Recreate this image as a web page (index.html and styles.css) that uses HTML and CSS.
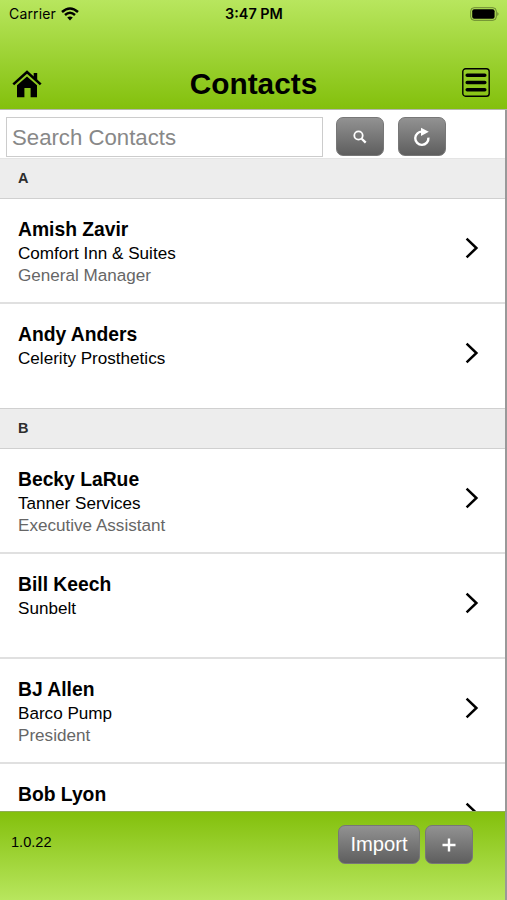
FILE: index.html
```
<!DOCTYPE html>
<html lang="en">
<head>
  <meta charset="UTF-8" />
  <title>Contacts</title>
  <link rel="stylesheet" href="styles.css">
</head>
<body>
  <div id="header">
    <div class="status-bar">
      <div class="carrier">
        <span>Carrier</span>
        <svg width="18" height="14" viewBox="0 0 18 14" fill="none" stroke="#000" stroke-width="2.5">
          <path d="M1 5 Q9 -2 17 5" />
          <path d="M4 8 Q9 3.6 14 8" />
          <path d="M9 13.4 L6.2 10.5 Q9 8.3 11.8 10.5 Z" fill="#000" stroke="none" />
        </svg>
      </div>
      <div class="time">3:47 PM</div>
      <div class="battery">
        <svg width="30" height="14" viewBox="0 0 30 14">
          <rect x="0.7" y="0.7" width="25.6" height="12.6" rx="3.5" fill="none" stroke="#000" stroke-opacity="0.4" />
          <rect x="2.2" y="2.2" width="22.4" height="9.6" rx="2" />
          <path d="M27.4 5 Q29.6 7 27.4 9 Z" fill-opacity="0.45" />
        </svg>
      </div>
    </div>
    <div class="title-bar">
      <svg class="home" width="30" height="28" viewBox="0 0 30 28">
        <path d="M1.3 14.4 L15 2 L28.7 14.4" fill="none" stroke="#000" stroke-width="2.6" />
        <path d="M21.7 3 H25.2 V10.6 L21.7 7.4 Z" />
        <path d="M5 15.2 L15 6.4 L25 15.2 V27.3 H18.6 V18 H12.4 V27.3 H5 Z" />
      </svg>
      <h1>Contacts</h1>
      <svg class="menu" width="28" height="29" viewBox="0 0 28 29" fill="none" stroke="#000">
        <rect x="0.8" y="0.8" width="26.4" height="27.4" rx="2.8" stroke-width="1.4" />
        <path d="M5.2 7.2 H22.8 M5.2 14.5 H22.8 M5.2 21.8 H22.8" stroke-width="3.5" stroke-linecap="round" />
      </svg>
    </div>
  </div>

  <div id="content">
    <div class="search-row">
      <input class="search" type="text" placeholder="Search Contacts">
      <button class="btn btn-icon">
        <svg width="14" height="14" viewBox="0 0 14 14" fill="none" stroke="#fff">
          <circle cx="5.5" cy="5.5" r="4.2" stroke-width="1.8" />
          <path d="M8.7 8.7 L12.7 12.6" stroke-width="2.3" />
        </svg>
      </button>
      <button class="btn btn-icon">
        <svg width="18" height="20" viewBox="0 0 18 20">
          <path d="M9.5 4.7 A6.6 6.6 0 1 0 15.4 10.6" fill="none" stroke="#fff" stroke-width="2.4" />
          <path d="M8 0.8 L15.8 4.8 L8 9 Z" fill="#fff" />
        </svg>
      </button>
    </div>

    <div class="divider first">A</div>
    <div class="contact">
      <div class="info">
        <div class="name">Amish Zavir</div>
        <div class="company">Comfort Inn &amp; Suites</div>
        <div class="job">General Manager</div>
      </div>
      <svg class="arrow" width="14" height="22" viewBox="0 0 14 22"><path d="M1.6 1.6 L11.4 11 L1.6 20.4" /></svg>
    </div>
    <div class="contact">
      <div class="info">
        <div class="name">Andy Anders</div>
        <div class="company">Celerity Prosthetics</div>
      </div>
      <svg class="arrow" width="14" height="22" viewBox="0 0 14 22"><path d="M1.6 1.6 L11.4 11 L1.6 20.4" /></svg>
    </div>

    <div class="divider">B</div>
    <div class="contact">
      <div class="info">
        <div class="name">Becky LaRue</div>
        <div class="company">Tanner Services</div>
        <div class="job">Executive Assistant</div>
      </div>
      <svg class="arrow" width="14" height="22" viewBox="0 0 14 22"><path d="M1.6 1.6 L11.4 11 L1.6 20.4" /></svg>
    </div>
    <div class="contact">
      <div class="info">
        <div class="name">Bill Keech</div>
        <div class="company">Sunbelt</div>
      </div>
      <svg class="arrow" width="14" height="22" viewBox="0 0 14 22"><path d="M1.6 1.6 L11.4 11 L1.6 20.4" /></svg>
    </div>
    <div class="contact">
      <div class="info">
        <div class="name">BJ Allen</div>
        <div class="company">Barco Pump</div>
        <div class="job">President</div>
      </div>
      <svg class="arrow" width="14" height="22" viewBox="0 0 14 22"><path d="M1.6 1.6 L11.4 11 L1.6 20.4" /></svg>
    </div>
    <div class="contact">
      <div class="info">
        <div class="name">Bob Lyon</div>
      </div>
      <svg class="arrow" width="14" height="22" viewBox="0 0 14 22"><path d="M1.6 1.6 L11.4 11 L1.6 20.4" /></svg>
    </div>
  </div>

  <div id="footer">
    <span class="version">1.0.22</span>
    <button class="btn btn-import">Import</button>
    <button class="btn btn-icon">
      <svg width="14" height="14" viewBox="0 0 14 14"><path d="M7 0.5 V13.5 M0.5 7 H13.5" stroke="#fff" stroke-width="2.4" /></svg>
    </button>
  </div>
</body>
</html>
```
FILE: styles.css
```
* {
  box-sizing: border-box;
}
body {
  margin: 0;
  height: 900px;
  overflow: hidden;
  display: flex;
  flex-direction: column;
  background: #fff;
  color: #000;
  font-family: "Liberation Sans", Arial, sans-serif;
}
svg {
  display: block;
  flex: none;
}
#header {
  flex: none;
  height: 110px;
  background: linear-gradient(#b8e65e, #83c00c);
  border-bottom: 1px solid #b4b8ac;
}
.status-bar {
  display: grid;
  grid-template-columns: 1fr auto 1fr;
  align-items: center;
  height: 27px;
  padding: 0 8px 0 9px;
  font-family: Inter, sans-serif;
  font-size: 14px;
}
.carrier {
  display: flex;
  align-items: center;
  gap: 5px;
  letter-spacing: 0.15px;
}
.time {
  font-weight: 600;
  font-size: 14.4px;
}
.battery {
  justify-self: end;
  margin-right: -1px;
}
.title-bar {
  display: flex;
  align-items: center;
  justify-content: space-between;
  height: 57px;
  margin-top: 27px;
  padding: 3px 17px 0 12px;
}
.menu {
  margin-top: -4px;
}
h1 {
  margin: 0 0 0 3px;
  font-size: 29.8px;
  line-height: 34px;
}
#content {
  flex: 1;
  min-height: 0;
  overflow: hidden;
  border-right: 2px solid #999;
}
.search-row {
  display: flex;
  height: 48px;
  padding: 7px 6px 0;
}
.search {
  width: 317px;
  height: 40px;
  margin-right: 13px;
  padding: 2px 5px 0;
  border: 1px solid #ccc;
  border-radius: 0;
  font-family: inherit;
  font-size: 22.2px;
}
.search::placeholder {
  color: #888;
}
.btn {
  display: flex;
  align-items: center;
  justify-content: center;
  height: 39px;
  padding: 0;
  border: 1px solid #777;
  border-radius: 7px;
  background: linear-gradient(#929292, #5e5e5e);
  color: #fff;
  font-family: inherit;
  font-size: 20.2px;
}
.btn-icon {
  width: 48px;
}
.search-row .btn-icon + .btn-icon {
  margin-left: 14px;
}
.divider {
  height: 41px;
  padding: 0 18px;
  border-top: 1px solid #d0d0d0;
  border-bottom: 1px solid #d0d0d0;
  background: #ededed;
  color: #2e2e2e;
  font-size: 14.5px;
  font-weight: bold;
  line-height: 39px;
}
.divider.first {
  border-top-color: #e4e4e4;
}
.contact {
  display: flex;
  justify-content: space-between;
  height: 105px;
  padding: 18px 26px 0 18px;
  border-bottom: 2px solid #e0e0e0;
}
.divider + .contact + .contact:has(+ .divider) {
  height: 104px;
  border-bottom: none;
}
.name {
  font-size: 19.3px;
  font-weight: bold;
  line-height: 25px;
}
.company,
.job {
  font-size: 17.1px;
  line-height: 22px;
}
.company {
  margin-top: 1px;
}
.job {
  color: #666;
}
.arrow {
  margin-top: 20px;
  fill: none;
  stroke: #000;
  stroke-width: 2.5;
}
#footer {
  flex: none;
  display: flex;
  align-items: flex-start;
  height: 89px;
  padding: 13px 32px 0 11px;
  border-top: 1px solid #8fae55;
  border-right: 2px solid #999;
  background: linear-gradient(#83c00c, #b8e65e);
}
.version {
  flex: 1;
  font-size: 14.6px;
  line-height: 35px;
}
.btn-import {
  width: 82px;
  margin-right: 5px;
}
```
